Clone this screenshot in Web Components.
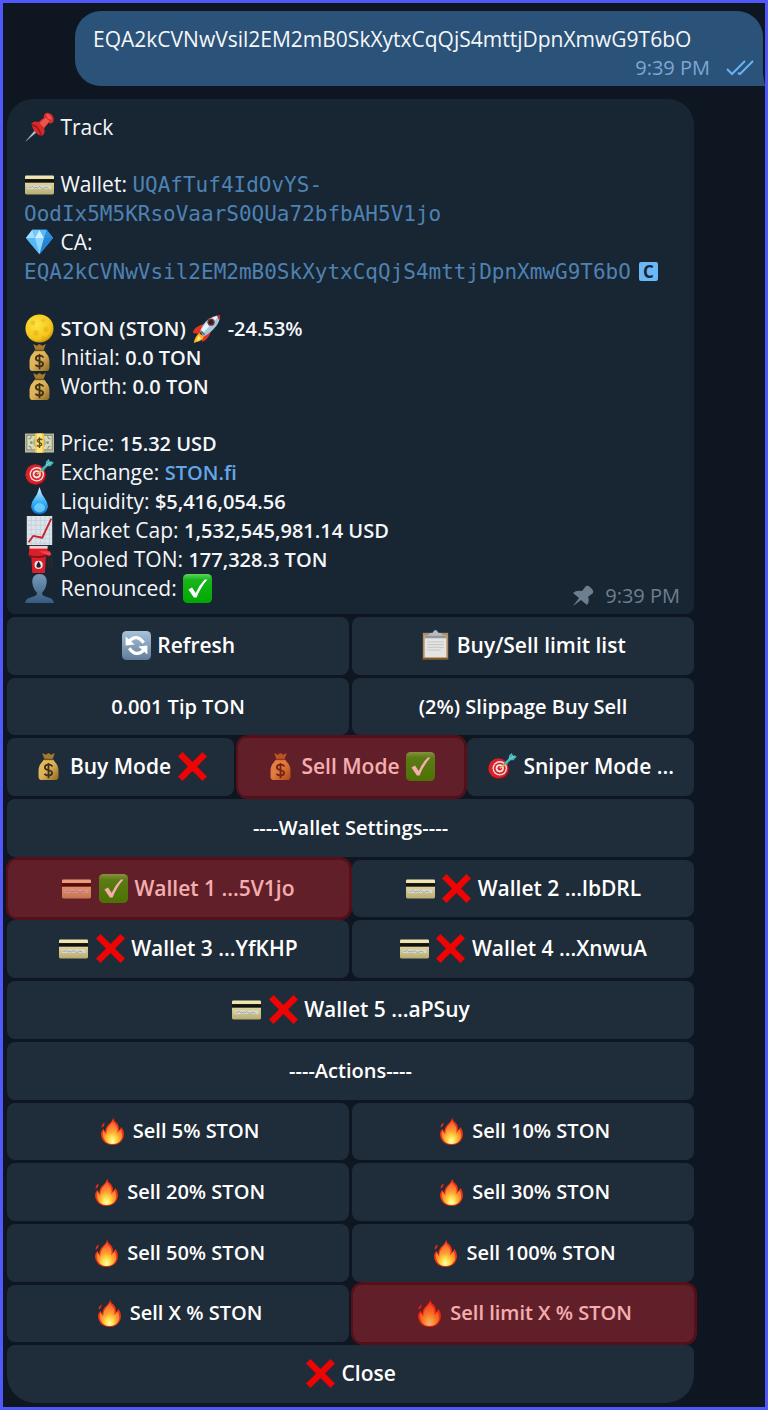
<!DOCTYPE html>
<html lang="en">
<head>
<meta charset="utf-8">
<meta name="viewport" content="width=device-width, initial-scale=1">
<title>STON tracker chat</title>
<style>
html, body { margin: 0; padding: 0; background: #0e1621; }
body { font: 400 21px/29px "Open Sans", "Noto Sans", sans-serif; color: #f5f7f9; }
</style>
</head>
<body>
<chat-window>
  <sent-message time="9:39 PM">EQA2kCVNwVsil2EM2mB0SkXytxCqQjS4mttjDpnXmwG9T6bO</sent-message>

  <bot-message time="9:39 PM">
    <info-line><emoji-icon name="pin"></emoji-icon> Track</info-line>
    <info-line group><emoji-icon name="card"></emoji-icon> Wallet: <wallet-code>UQAfTuf4IdOvYS-</wallet-code><wbr><wallet-code>OodIx5M5KRsoVaarS0QUa72bfbAH5V1jo</wallet-code></info-line>
    <info-line><emoji-icon name="gem"></emoji-icon> CA: <wallet-code>EQA2kCVNwVsil2EM2mB0SkXytxCqQjS4mttjDpnXmwG9T6bO</wallet-code><code-chip>C</code-chip></info-line>
    <info-line group><emoji-icon name="moon"></emoji-icon> <strong-text>STON (STON)</strong-text> <emoji-icon name="rocket"></emoji-icon> <strong-text>-24.53%</strong-text></info-line>
    <info-line><emoji-icon name="bag"></emoji-icon> Initial: <strong-text>0.0 TON</strong-text></info-line>
    <info-line><emoji-icon name="bag"></emoji-icon> Worth: <strong-text>0.0 TON</strong-text></info-line>
    <info-line group><emoji-icon name="cash"></emoji-icon> Price: <strong-text>15.32 USD</strong-text></info-line>
    <info-line><emoji-icon name="target"></emoji-icon> Exchange: <text-link href="#ston-fi">STON.fi</text-link></info-line>
    <info-line><emoji-icon name="drop"></emoji-icon> Liquidity: <strong-text>$5,416,054.56</strong-text></info-line>
    <info-line><emoji-icon name="chart"></emoji-icon> Market Cap: <strong-text>1,532,545,981.14 USD</strong-text></info-line>
    <info-line><emoji-icon name="pump"></emoji-icon> Pooled TON: <strong-text>177,328.3 TON</strong-text></info-line>
    <info-line slot="last"><emoji-icon name="person"></emoji-icon> Renounced: <emoji-icon name="check"></emoji-icon></info-line>
  </bot-message>

  <inline-keyboard>
    <key-row>
      <key-button><emoji-icon name="refresh"></emoji-icon> Refresh</key-button>
      <key-button><emoji-icon name="clipboard"></emoji-icon> Buy/Sell limit list</key-button>
    </key-row>
    <key-row compact>
      <key-button>0.001 Tip TON</key-button>
      <key-button>(2%) Slippage Buy Sell</key-button>
    </key-row>
    <key-row>
      <key-button><emoji-icon name="bag"></emoji-icon> Buy Mode <emoji-icon name="cross"></emoji-icon></key-button>
      <key-button marked><emoji-icon name="bag"></emoji-icon> Sell Mode <emoji-icon name="check"></emoji-icon></key-button>
      <key-button><emoji-icon name="target"></emoji-icon> Sniper Mode ...</key-button>
    </key-row>
    <key-row compact><key-button>----Wallet Settings----</key-button></key-row>
    <key-row>
      <key-button marked><emoji-icon name="card"></emoji-icon> <emoji-icon name="check"></emoji-icon> Wallet 1 ...5V1jo</key-button>
      <key-button><emoji-icon name="card"></emoji-icon> <emoji-icon name="cross"></emoji-icon> Wallet 2 ...lbDRL</key-button>
    </key-row>
    <key-row>
      <key-button><emoji-icon name="card"></emoji-icon> <emoji-icon name="cross"></emoji-icon> Wallet 3 ...YfKHP</key-button>
      <key-button><emoji-icon name="card"></emoji-icon> <emoji-icon name="cross"></emoji-icon> Wallet 4 ...XnwuA</key-button>
    </key-row>
    <key-row><key-button><emoji-icon name="card"></emoji-icon> <emoji-icon name="cross"></emoji-icon> Wallet 5 ...aPSuy</key-button></key-row>
    <key-row compact><key-button>----Actions----</key-button></key-row>
    <key-row compact>
      <key-button><emoji-icon name="fire"></emoji-icon> Sell 5% STON</key-button>
      <key-button><emoji-icon name="fire"></emoji-icon> Sell 10% STON</key-button>
    </key-row>
    <key-row compact>
      <key-button><emoji-icon name="fire"></emoji-icon> Sell 20% STON</key-button>
      <key-button><emoji-icon name="fire"></emoji-icon> Sell 30% STON</key-button>
    </key-row>
    <key-row compact>
      <key-button><emoji-icon name="fire"></emoji-icon> Sell 50% STON</key-button>
      <key-button><emoji-icon name="fire"></emoji-icon> Sell 100% STON</key-button>
    </key-row>
    <key-row compact>
      <key-button><emoji-icon name="fire"></emoji-icon> Sell X % STON</key-button>
      <key-button marked><emoji-icon name="fire"></emoji-icon> Sell limit X % STON</key-button>
    </key-row>
    <key-row><key-button last><emoji-icon name="cross"></emoji-icon> Close</key-button></key-row>
  </inline-keyboard>
</chat-window>

<script>
const define = (name, html, setup) => customElements.define(name, class extends HTMLElement {
  constructor() {
    super();
    const template = document.createElement('template');
    template.innerHTML = html;
    this.attachShadow({ mode: 'open' }).append(template.content.cloneNode(true));
    if (setup) setup(this, this.shadowRoot);
  }
});

/* Emoji artwork, each on a 32 x 32 grid */
const ART = {
  pin: `<path d="M1 31 12 18l2 2z" fill="#b9cbd8" stroke="#7f929f" stroke-width=".6"/><path d="M7 12q3-4 8-2l6-5q-1-3 2-5 5-1 8 4 2 4-1 7-2 1-4 0l-5 6q2 5-2 8-9-1-12-13z" fill="#d62a2b"/><path d="M16 11l7-6 4 4-6 7z" fill="#f0524c"/><path d="M23 1q5 0 7 6-5 1-7-6z" fill="#f6554e"/><path d="M8 13q6 1 10 11" fill="none" stroke="#9d1219" stroke-width="1.5"/>`,
  card: `<defs><linearGradient id="g" x2="0" y2="1"><stop stop-color="#f5ecb5"/><stop offset="1" stop-color="#b8ac73"/></linearGradient></defs><rect y="6" width="32" height="21" rx="1.5" fill="url(#g)"/><path d="M0 10h32v4H0z" fill="#111"/><path d="M3 17h26v4H3z" fill="#dcd9c6"/><path d="M4 19h3l1-1 2 2 2-1 2 1 2-2 2 2h3l2-1 3 1" fill="none" stroke="#8aa0bd" stroke-width="1"/>`,
  gem: `<path d="M8 2h16l7 9-15 18L1 11z" fill="#49a9ee"/><path d="M8 2l3 9H1z" fill="#a8defd"/><path d="M8 2h8l-5 9z" fill="#70c7fb"/><path d="M16 2l-5 9h10z" fill="#d0f0ff"/><path d="M16 2h8l-3 9z" fill="#5bb9f7"/><path d="M24 2l7 9H21z" fill="#2991df"/><path d="M1 11h10l5 18z" fill="#57b8f8"/><path d="M11 11h10l-5 18z" fill="#8ed6ff"/><path d="M21 11h10L16 29z" fill="#2484d5"/>`,
  moon: `<defs><radialGradient id="g" cx=".4" cy=".35" r=".7"><stop stop-color="#ffe540"/><stop offset=".75" stop-color="#f4c41b"/><stop offset="1" stop-color="#c78b09"/></radialGradient></defs><circle cx="16" cy="16" r="15.5" fill="url(#g)"/><g fill="#dfa911" opacity=".45"><circle cx="9" cy="10" r="2.5"/><circle cx="20" cy="7" r="2"/><circle cx="23" cy="17" r="3"/><circle cx="12" cy="21" r="3"/><circle cx="20" cy="26" r="2"/></g>`,
  bag: `<defs><linearGradient id="g" x2="1" y2="1"><stop stop-color="#e5c063"/><stop offset=".5" stop-color="#dcb258"/><stop offset="1" stop-color="#8e6520"/></linearGradient></defs><path d="M9 1l4 2 3-2 3 2 4-2-3 8h-8z" fill="#a77a30"/><path d="M12 7h8l4 5q3 3 3 9v6q0 4-4 4H9q-4 0-4-4v-6q0-6 3-9z" fill="url(#g)"/><path d="M11 8h10" stroke="#70501d" stroke-width="2"/><path d="M20.500 16q-1.500-2-4.500-2-4 0-4 3 0 2 4 3t4 3q0 3-4 3-3 0-4.500-2M16 12v17" fill="none" stroke="#403018" stroke-width="2"/>`,
  rocket: `<path d="M8 13q4-3 8 0L8 22l-7-1q1-6 7-8zM19 15q3 4 0 9-3 5-8 7l0-9z" fill="#df351e"/><path d="M8 21l5 4q-1 4-8 6l-3 1q1-7 6-11z" fill="#ffb51e"/><path d="M7 24l3 3-5 3z" fill="#fff19a"/><path d="M9 19Q14 3 31 1 31 14 13 25z" fill="#a4c8df"/><path d="M10 18Q17 4 31 1L12 21z" fill="#e9f4fb"/><path d="M27 1h4q0 4-1 6z" fill="#c12a24"/><circle cx="21" cy="9" r="4" fill="#922c2b"/><circle cx="21" cy="9" r="2.5" fill="#172b39"/><path d="M10 19l4 4" stroke="#577387" stroke-width="2"/>`,
  cash: `<rect y="5" width="32" height="21" fill="#b8b99c"/><rect x="2" y="7" width="28" height="16" fill="#d7d9be" stroke="#83866f" stroke-width="1"/><path d="M4 11q3 0 3-3M4 19q3 0 3 3M28 11q-3 0-3-3M28 19q-3 0-3 3" stroke="#747961" fill="none"/><circle cx="7" cy="15" r="1.500" fill="#6c9a76"/><circle cx="25" cy="15" r="1.500" fill="#6c9a76"/><circle cx="16" cy="15" r="7" fill="#afb093"/><path d="M11 5h10v21H11z" fill="#f2ca3f"/><path d="M13 5h6v21h-6z" fill="#ffe789"/><path d="M19 12q-3-2-5 0-1 2 2 3t2 3q-2 2-5 0M16 9v12" fill="none" stroke="#605023" stroke-width="1.500"/>`,
  target: `<ellipse cx="12" cy="19" rx="11.500" ry="11" fill="#8d1218"/><circle cx="11.500" cy="18" r="11" fill="#d7222a"/><circle cx="13" cy="18" r="8" fill="#f7dedc"/><circle cx="13" cy="18" r="6.500" fill="#d52630"/><circle cx="13" cy="18" r="4.500" fill="#f5e4e1"/><circle cx="13" cy="18" r="2.500" fill="#d2212b"/><path d="M13 18l8-6" stroke="#e3b653" stroke-width="2"/><path d="M17 13l6-6 0-3 3-3 2 3 4 1-4 4-3 0-6 6z" fill="#43b5bb"/><path d="M23 8l7-4" stroke="#8fe1dc" stroke-width="1"/>`,
  drop: `<defs><linearGradient id="g" x2="0" y2="1"><stop stop-color="#dff5ff"/><stop offset=".5" stop-color="#44b8fb"/><stop offset="1" stop-color="#0671d1"/></linearGradient></defs><path d="M16 0q2 8 6 13 4 5 3 10-2 7-9 7t-9-7q-1-5 3-10 4-5 6-13z" fill="url(#g)"/><ellipse cx="16" cy="23" rx="6" ry="5" fill="#8be5ff" opacity=".65"/>`,
  chart: `<path d="M2 0h28v32H2z" fill="#dce4eb"/><path d="M7 0v32M12 0v32M17 0v32M22 0v32M27 0v32M2 5h28M2 10h28M2 15h28M2 20h28M2 25h28M2 30h28" stroke="#bdc9d4" stroke-width=".7"/><path d="M4 29l5-7 10 2 10-21" fill="none" stroke="#cd2028" stroke-width="2" stroke-linejoin="round"/>`,
  pump: `<path d="M24 6q5-1 5 5l1 11q-1 4-4 2V13l-3-2" fill="none" stroke="#252a31" stroke-width="2"/><path d="M5 2h19l2 8-3 3-1 18H8L7 13l-3-2z" fill="#d91e2c"/><path d="M5 1h20v3H5z" fill="#f2d0d1"/><path d="M4 11q11 3 22-1v2q-10 4-22 1z" fill="#86101b"/><path d="M15 7h12l2 3-2 2z" fill="#f4414a"/><circle cx="15" cy="22" r="4.500" fill="#f1e8e7"/><path d="M15 18q5 7 0 7t0-7z" fill="#261e24"/>`,
  person: `<defs><linearGradient id="g" x2="0" y2="1"><stop stop-color="#789bb9"/><stop offset="1" stop-color="#355b82"/></linearGradient></defs><path d="M16 0q8 0 8 9-1 8-5 11v3q2 2 7 3 5 1 6 6H0q1-5 6-6 5-1 7-3v-3q-4-3-5-11 0-9 8-9z" fill="url(#g)"/>`,
  check: `<defs><linearGradient id="g" x2="0" y2="1"><stop stop-color="#5ad65b"/><stop offset=".2" stop-color="#18b51c"/><stop offset="1" stop-color="#00a800"/></linearGradient></defs><rect width="32" height="32" rx="5" fill="url(#g)"/><path d="M6 17l4-2 4 6Q18 12 24 6h3Q19 15 15 26h-3z" fill="#fff"/>`,
  cross: `<path d="M5 0l11 11L27 0l5 5-11 11 11 11-5 5-11-11L5 32l-5-5 11-11L0 5z" fill="#ef0404"/>`,
  refresh: `<defs><linearGradient id="g" x2="0" y2="1"><stop stop-color="#a8c2d9"/><stop offset="1" stop-color="#617d9a"/></linearGradient></defs><rect width="32" height="32" rx="5" fill="url(#g)"/><path d="M7 12q9-10 17 1M25 20q-9 10-17-1" fill="none" stroke="#fff" stroke-width="3.500"/><path d="M4 6v10l10-1zM28 26V16l-10 1z" fill="#fff"/>`,
  clipboard: `<path d="M2 2h28v30H2z" fill="#b18d61"/><path d="M2 30h28v2H2z" fill="#70502d"/><path d="M4 5h24v24H4z" fill="#e5e4e3"/><path d="M4 5h24v3H4z" fill="#92989c"/><path d="M8 5q0-3 5-3 1-3 3-3t3 3q5 0 5 3z" fill="#b5bdc3"/><path d="M7 12h18M7 15h18M7 18h18M7 21h15" stroke="#c0c1c4"/>`,
  fire: `<defs><radialGradient id="g" cx=".5" cy=".9" r=".85"><stop stop-color="#fffbc3"/><stop offset=".22" stop-color="#ffe34c"/><stop offset=".5" stop-color="#ff9a31"/><stop offset=".78" stop-color="#ff6a35"/><stop offset="1" stop-color="#e92c0c"/></radialGradient></defs><path d="M17 0q-1 4 3 7 4 4 3 9l3-4q4 6 2 12-3 8-12 8T4 24q-2-6 2-10l2 4q0-6 4-9 5-4 5-9z" fill="#ef3411"/><path d="M17 2q-1 4 2 7 4 4 2 10l4-4q3 6 1 10-3 6-10 6T6 24q-2-4 0-8l3 4q0-6 4-10 4-4 4-8z" fill="url(#g)"/><path d="M7 7q-3 2-3 6 4-2 3-6z" fill="#de2e12"/>`
};

define('emoji-icon', `<style>
  :host { display: inline-block; width: 29px; height: 29px; margin: -8px 1px; vertical-align: 1px; }
  svg { display: block; width: 100%; height: 100%; overflow: visible; }
</style>`, (el, root) => {
  const name = el.getAttribute('name');
  root.innerHTML += `<svg viewBox="0 0 32 32" role="img" aria-label="${name}">${ART[name]}</svg>`;
});

define('chat-window', `<style>
  :host { display: flex; flex-direction: column; box-sizing: border-box; min-height: 100vh;
    border: 3px solid #5058fb; padding: 8px 71px 4px 4px; background: #0e1621; }
</style><slot></slot>`);

define('sent-message', `<style>
  :host { display: block; margin: 0 -69px 13px 68px; }
  .bubble { position: relative; padding: 14px 9px 6px 18px; border-radius: 26px 26px 0 26px; background: #2b5278; }
  .bubble::after { content: ""; position: absolute; right: -2px; bottom: 0; width: 2px; height: 12px;
    background: #2b5278; clip-path: polygon(0 0, 100% 100%, 0 100%); }
  .text { overflow-wrap: anywhere; }
  .meta { display: flex; justify-content: flex-end; align-items: center; gap: 15px; margin-top: 2px;
    font-size: 20px; line-height: 24px; color: #7da8d3; }
  svg { width: 29px; height: 18px; }
</style>
<div class="bubble">
  <div class="text"><slot></slot></div>
  <div class="meta"><time></time><svg viewBox="0 0 29 18" role="img" aria-label="Read"><path d="M2 10l5 5L20 2M13 14l2 1L28 2" fill="none" stroke="#66b4f5" stroke-width="2"/></svg></div>
</div>`, (el, root) => { root.querySelector('time').textContent = el.getAttribute('time'); });

define('bot-message', `<style>
  :host { display: block; margin-bottom: 3px; padding: 14px 14px 6px 17px;
    border-radius: 26px 26px 8px 8px; background: #182533; }
  .end { display: flex; justify-content: space-between; align-items: flex-start; }
  .meta { display: flex; align-items: center; gap: 11px; margin-top: 10px;
    font-size: 20px; line-height: 24px; color: #6d7f8f; }
  svg { width: 22px; height: 22px; }
</style>
<slot></slot>
<div class="end">
  <slot name="last"></slot>
  <div class="meta"><svg viewBox="0 0 22 22" role="img" aria-label="Pinned"><path d="M14 1q2-1 4 1l2 2q2 2 1 4l-5 4q2 4-1 8l-6-5-8 6 6-8-6-5q3-3 9-2z" fill="currentColor"/></svg><time></time></div>
</div>`, (el, root) => { root.querySelector('time').textContent = el.getAttribute('time'); });

define('info-line', `<style>
  :host { display: block; }
  :host([group]) { margin-top: 28px; }
</style><slot></slot>`);

define('strong-text', `<style>
  :host { display: inline; }
  strong { font-size: 20px; font-weight: 600; }
</style><strong><slot></slot></strong>`);

define('wallet-code', `<style>
  :host { display: inline; }
  code { font: 400 21px/28px "DejaVu Sans Mono", "Liberation Mono", monospace; color: #4d82b2; }
</style><code><slot></slot></code>`);

define('code-chip', `<style>
  :host { display: inline-block; width: 19px; height: 19px; margin-left: 8px; border-radius: 2px;
    background: #6ab8f7; color: #182533; font: 700 17px/19px "Open Sans", sans-serif; text-align: center; vertical-align: 1px; }
</style><slot></slot>`);

define('text-link', `<style>
  :host { display: inline; }
  a { font-size: 20px; font-weight: 600; color: #62a8e8; text-decoration: none; }
</style><a><slot></slot></a>`, (el, root) => { root.querySelector('a').href = el.getAttribute('href'); });

define('inline-keyboard', `<style>
  :host { flex: 1; display: grid; grid-auto-rows: 1fr; gap: 3px; }
</style><slot></slot>`);

define('key-row', `<style>
  :host { display: grid; grid-auto-flow: column; grid-auto-columns: minmax(0, 1fr); gap: 3px; }
  :host([compact]) { font-size: 20px; }
</style><slot></slot>`);

define('key-button', `<style>
  :host { display: grid; position: relative; }
  button { min-width: 0; min-height: 48px; margin: 0; padding: 0 4px 1px; border: 0; border-radius: 8px; background: #1f2c39;
    color: #fff; font: inherit; font-weight: 600; white-space: nowrap; cursor: pointer; }
  :host([last]) button { border-radius: 8px 8px 28px 28px; }
  :host([marked]) { z-index: 1; }
  :host([marked])::after { content: ""; position: absolute; inset: -3px -3px -3px -1px; box-sizing: border-box;
    border: 2px solid #590f19; border-radius: 12px; background: rgba(230, 5, 8, .33); background-clip: padding-box; pointer-events: none; }
</style><button type="button"><slot></slot></button>`);
</script>
</body>
</html>
